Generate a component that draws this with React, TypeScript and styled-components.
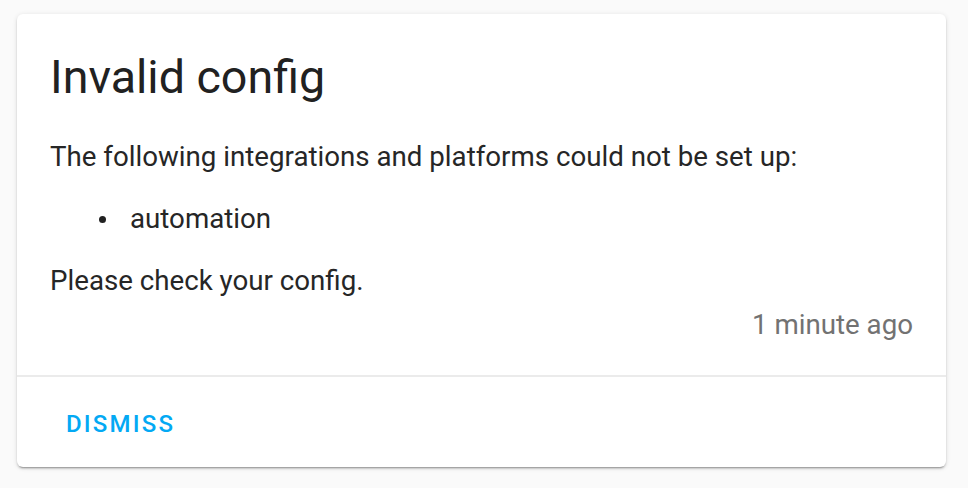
import React from 'react';
import styled, { createGlobalStyle } from 'styled-components';

const GlobalStyle = createGlobalStyle`
  html, body {
    margin: 0;
    padding: 0;
    background: #fafafa;
    font-family: Roboto, 'Noto Sans', sans-serif;
    -webkit-font-smoothing: antialiased;
  }
`;

const Page = styled.div`
  padding: 14px 22px 20px 17px;
`;

const Card = styled.div`
  background: #ffffff;
  border-radius: 6px;
  box-shadow: 0 2px 2px 0 rgba(0, 0, 0, 0.14), 0 1px 5px 0 rgba(0, 0, 0, 0.12),
    0 3px 1px -2px rgba(0, 0, 0, 0.2);
  display: flex;
  flex-direction: column;
  height: 453px;
  box-sizing: border-box;
`;

const Header = styled.div`
  font: 400 46.6px/64px Roboto, sans-serif;
  color: #212121;
  padding: 31px 33px 0;
`;

const Content = styled.div`
  padding: 28px 33px 0;
  color: #262626;
  font: 400 27.7px/40px Roboto, sans-serif;
  display: flex;
  flex-direction: column;
  gap: 22px;
`;

const Para = styled.div``;

const List = styled.ul`
  margin: 0;
  padding-left: 80px;
  list-style: none;
`;

const Item = styled.li`
  position: relative;
  &::before {
    content: '';
    position: absolute;
    left: -31px;
    top: 17px;
    width: 7px;
    height: 7px;
    border-radius: 50%;
    background: #212121;
  }
`;

const Time = styled.div`
  text-align: right;
  color: #727272;
  margin-top: -18px;
`;

const Divider = styled.div`
  height: 2px;
  background: #ebebeb;
  margin-top: auto;
`;

const Actions = styled.div`
  height: 90px;
  display: flex;
  align-items: center;
  padding: 0 32px;
`;

const Button = styled.button`
  background: none;
  border: none;
  padding: 4px 17px 0;
  font: 500 24px/40px Roboto, sans-serif;
  letter-spacing: 2.2px;
  text-transform: uppercase;
  color: #03a9f4;
  cursor: pointer;
`;

export default function App() {
  return (
    <>
      <GlobalStyle />
      <Page>
        <Card>
          <Header>Invalid config</Header>
          <Content>
            <Para>The following integrations and platforms could not be set up:</Para>
            <List>
              <Item>automation</Item>
            </List>
            <Para>Please check your config.</Para>
            <Time>1 minute ago</Time>
          </Content>
          <Divider />
          <Actions>
            <Button>Dismiss</Button>
          </Actions>
        </Card>
      </Page>
    </>
  );
}
